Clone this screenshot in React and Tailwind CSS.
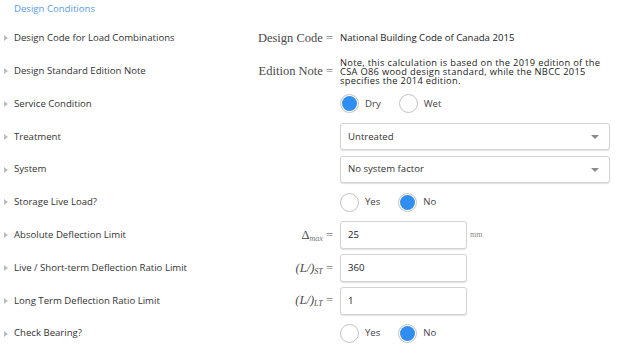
import React from "react";

const font = { fontFamily: '"Open Sans", "Noto Sans", sans-serif' };
const serif = { fontFamily: '"Liberation Serif", "DejaVu Serif", serif' };

function Tri() {
  return (
    <svg width="4" height="6" viewBox="0 0 4 6" className="shrink-0">
      <path d="M0 0 L4 3 L0 6 Z" fill="#bdbdbd" />
    </svg>
  );
}

function Radio({ checked, label }) {
  return (
    <div className="flex items-center gap-[6px]">
      <span className="w-[19px] h-[19px] rounded-full border border-[#c4c4c4] bg-white flex items-center justify-center">
        {checked && <span className="w-[15px] h-[15px] rounded-full bg-[#2f8ef0]" />}
      </span>
      <span className="text-[9.6px] text-[#444]">{label}</span>
    </div>
  );
}

function Select({ value }) {
  return (
    <div className="w-[270px] h-[27px] border border-[#d4d4d4] rounded-[3px] shadow-[0_1px_1px_rgba(0,0,0,0.12)] bg-white flex items-center justify-between pl-[7px] pr-[10px]">
      <span className="text-[9.6px] text-[#333]">{value}</span>
      <svg width="8" height="4" viewBox="0 0 8 4">
        <path d="M0 0 L8 0 L4 4 Z" fill="#8a8a8a" />
      </svg>
    </div>
  );
}

function Input({ value }) {
  return (
    <div className="w-[127px] h-[28px] border border-[#d4d4d4] rounded-[3px] shadow-[0_1px_1px_rgba(0,0,0,0.12)] bg-white flex items-center pl-[7px]">
      <span className="text-[9.6px] text-[#222]">{value}</span>
    </div>
  );
}

function Row({ label, math, children }) {
  return (
    <div className="h-[32.8px] flex items-center">
      <div className="w-[240px] flex items-center pl-[4px] gap-[6px]">
        <Tri />
        <span className="text-[9.6px] text-[#333]">{label}</span>
      </div>
      <div className="w-[94px] pr-[1px] text-right text-[12.5px] text-[#4a4a4a] whitespace-nowrap" style={serif}>
        {math}
      </div>
      <div className="pl-[6px] flex items-center">{children}</div>
    </div>
  );
}

export default function App() {
  return (
    <div className="w-[624px] h-[354px] bg-white overflow-hidden pt-[1px]" style={font}>
      <div className="h-[21px] pl-[14px] leading-[16px] text-[9.6px] text-[#5a9be6]">Design Conditions</div>
      <Row label="Design Code for Load Combinations" math={<span>Design Code <span className="text-[#777]">=</span></span>}>
        <span className="text-[9.6px] text-[#222]">National Building Code of Canada 2015</span>
      </Row>
      <Row label="Design Standard Edition Note" math={<span>Edition Note <span className="text-[#777]">=</span></span>}>
        <div className="text-[9.3px] leading-[9px] tracking-[0.3px] text-[#222] whitespace-nowrap flex flex-col">
          <span>Note, this calculation is based on the 2019 edition of the</span>
          <span>CSA O86 wood design standard, while the NBCC 2015</span>
          <span>specifies the 2014 edition.</span>
        </div>
      </Row>
      <Row label="Service Condition" math={null}>
        <div className="flex items-center gap-[18px]">
          <Radio checked label="Dry" />
          <Radio label="Wet" />
        </div>
      </Row>
      <Row label="Treatment" math={null}>
        <Select value="Untreated" />
      </Row>
      <Row label="System" math={null}>
        <Select value="No system factor" />
      </Row>
      <Row label="Storage Live Load?" math={null}>
        <div className="flex items-center gap-[18px]">
          <Radio label="Yes" />
          <Radio checked label="No" />
        </div>
      </Row>
      <Row
        label="Absolute Deflection Limit"
        math={
          <span>
            Δ<sub className="italic text-[8px] text-[#777]">max</sub> <span className="text-[#777]">=</span>
          </span>
        }
      >
        <Input value="25" />
        <span className="ml-[3px] text-[8px] text-[#888]" style={serif}>mm</span>
      </Row>
      <Row
        label="Live / Short-term Deflection Ratio Limit"
        math={
          <span>
            <span className="italic">(L/)</span>
            <sub className="italic text-[8px]">ST</sub> <span className="text-[#777]">=</span>
          </span>
        }
      >
        <Input value="360" />
      </Row>
      <Row
        label="Long Term Deflection Ratio Limit"
        math={
          <span>
            <span className="italic">(L/)</span>
            <sub className="italic text-[8px]">LT</sub> <span className="text-[#777]">=</span>
          </span>
        }
      >
        <Input value="1" />
      </Row>
      <Row label="Check Bearing?" math={null}>
        <div className="flex items-center gap-[18px]">
          <Radio label="Yes" />
          <Radio checked label="No" />
        </div>
      </Row>
    </div>
  );
}
